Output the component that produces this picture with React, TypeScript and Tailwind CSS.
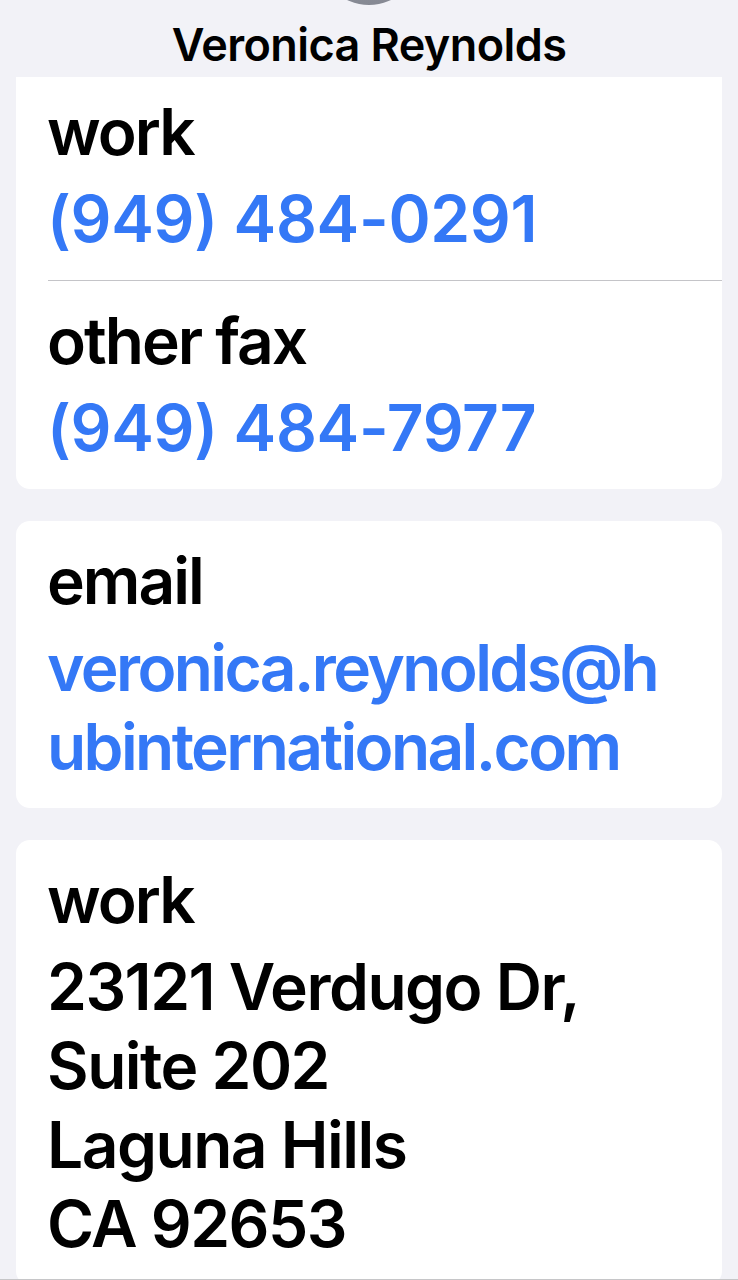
import React from 'react'

const font = { fontFamily: 'Inter, "Noto Sans", sans-serif' }

function Field({
  label,
  children,
  blue,
  track = 'tracking-[-0.3px]',
}: {
  label: string
  children: React.ReactNode
  blue?: boolean
  track?: string
}) {
  return (
    <div className="pl-[31px] pr-6 pt-5 pb-[22px]">
      <div className="text-[64px] leading-[79px] font-semibold text-black tracking-[-2px]">{label}</div>
      <div className={'mt-2 text-[64px] leading-[79px] font-semibold ' + track + ' ' + (blue ? 'text-[#3478f6]' : 'text-black')}>
        {children}
      </div>
    </div>
  )
}

export default function App() {
  return (
    <div className="h-[1280px] overflow-hidden bg-[#f2f2f7]" style={font}>
      <div className="mx-auto -mt-[97px] h-[102px] w-[102px] rounded-full bg-linear-to-b from-[#a9acb4] to-[#868993]" />
      <h1 className="mt-[13px] text-center text-[45px] leading-[54px] font-semibold text-black tracking-[-0.6px]">
        Veronica Reynolds
      </h1>

      <div className="mx-4 mt-[5px] flex flex-col gap-8">
        <div className="rounded-b-[14px] bg-white [&>div:first-child]:pt-[15px]">
          <Field label="work" blue>
            (949) 484-0291
          </Field>
          <div className="ml-8 h-px bg-[#c4c4c8]" />
          <Field label="other fax" blue>
            (949) 484-7977
          </Field>
        </div>

        <div className="rounded-[14px] bg-white">
          <Field label="email" blue track="tracking-[-2.6px]">
            <span className="block">veronica.reynolds@h</span>
            <span className="block">ubinternational.com</span>
          </Field>
        </div>

        <div className="rounded-[14px] bg-white">
          <Field label="work" track="tracking-[-1.5px]">
            <span className="block">23121 Verdugo Dr,</span>
            <span className="block">Suite 202</span>
            <span className="block">Laguna Hills</span>
            <span className="block">CA 92653</span>
          </Field>
        </div>
      </div>

      <div className="fixed inset-x-0 bottom-0 h-px bg-[#c6c6c8]" />
    </div>
  )
}
